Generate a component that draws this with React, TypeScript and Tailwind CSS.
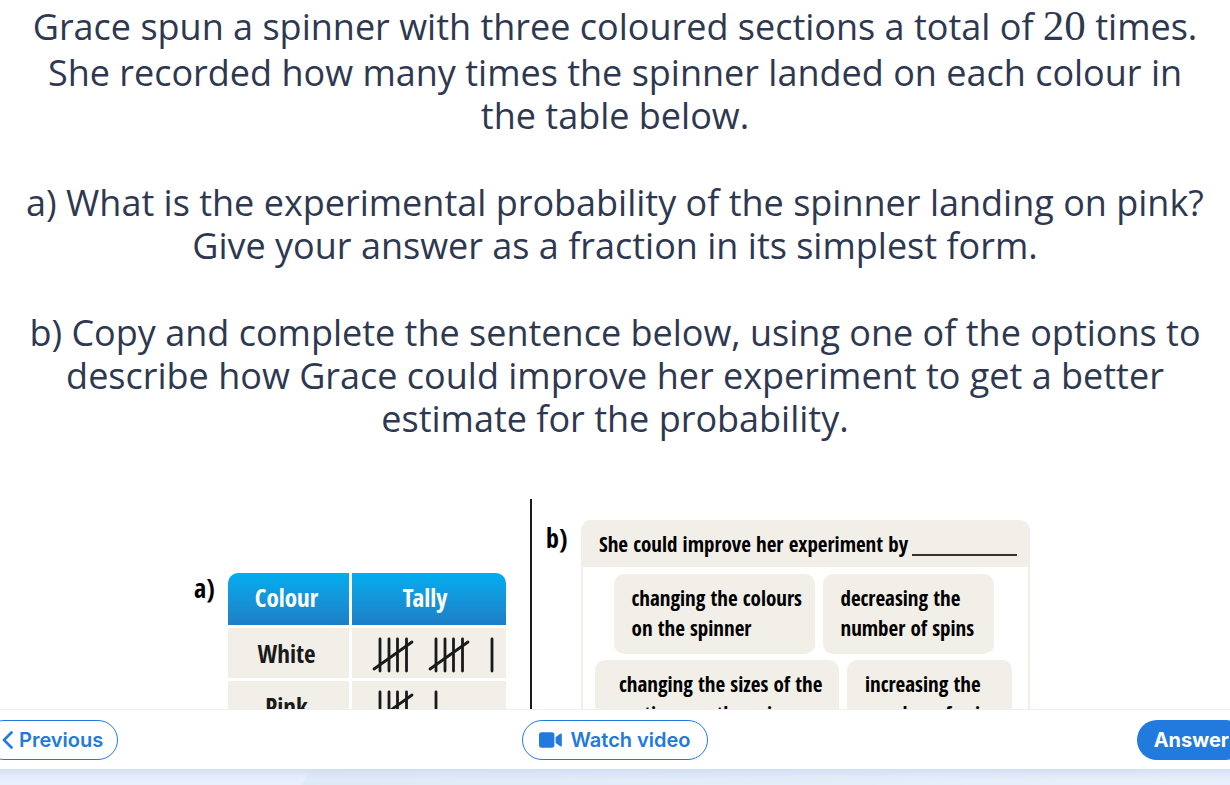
import type { ReactNode } from "react";

const INK = "#1a1a1a";

function FiveBar({ x }: { x: number }) {
  return (
    <g>
      {[0, 9, 17.5, 26.5].map((dx) => (
        <line key={dx} x1={x + dx} x2={x + dx} y1={11} y2={43} />
      ))}
      <line x1={x - 6} y1={41} x2={x + 32} y2={14} />
    </g>
  );
}

function Tally({ count }: { count: number }) {
  const fives = Math.floor(count / 5);
  const ones = count % 5;
  return (
    <svg
      viewBox="0 0 154 50"
      className="block h-[50px] w-full"
      fill="none"
      stroke={INK}
      strokeWidth={2.8}
      strokeLinecap="round"
      role="img"
      aria-label={String(count)}
    >
      {Array.from({ length: fives }, (_, i) => (
        <FiveBar key={i} x={28 + i * 56} />
      ))}
      {Array.from({ length: ones }, (_, i) => (
        <line key={i} x1={28 + fives * 56 + i * 9} x2={28 + fives * 56 + i * 9} y1={11} y2={43} />
      ))}
    </svg>
  );
}

function Option({ className, children }: { className: string; children: ReactNode }) {
  return (
    <li className={`h-20 rounded-[10px] bg-[#f2efe9] pt-[9px] text-[21px] leading-[30px] whitespace-nowrap ${className}`}>
      {children}
    </li>
  );
}

function VideoIcon() {
  return (
    <svg viewBox="0 0 23 16" className="h-4 w-[23px]" fill="currentColor" aria-hidden="true">
      <rect x="0" y="0.3" width="15.4" height="15.4" rx="2.6" />
      <path d="M16.6 6 Q16.6 5.2 17.2 4.7 L20.8 2 Q22.8 0.9 22.8 2.8 V13.2 Q22.8 15.1 20.8 14 L17.2 11.3 Q16.6 10.8 16.6 10 Z" />
    </svg>
  );
}

export default function App() {
  return (
    <div className="flex h-screen flex-col overflow-hidden bg-white font-['Open_Sans',sans-serif]">
      <main className="min-h-0 flex-1 overflow-hidden">
        <section className="flex flex-col gap-11 text-center text-4xl leading-[43px] text-[#2e3850]">
          <p>
            Grace spun a spinner with three coloured sections a total of{" "}
            <span className="font-['Liberation_Serif',serif] text-[43px] leading-[51px]">20</span> times.
            <br />
            She recorded how many times the spinner landed on each colour in
            <br />
            the table below.
          </p>
          <p>
            a) What is the experimental probability of the spinner landing on pink?
            <br />
            Give your answer as a fraction in its simplest form.
          </p>
          <p>
            b) Copy and complete the sentence below, using one of the options to
            <br />
            describe how Grace could improve her experiment to get a better
            <br />
            estimate for the probability.
          </p>
        </section>

        <section className="mt-[59px] flex justify-center font-['Open_Sans_Condensed','Open_Sans',sans-serif] font-bold text-black">
          <div className="flex w-[342px] shrink-0 items-start border-r-2 border-[#1a1a1a] pt-[71px] pl-1">
            <span className="w-[31px] text-[26px] leading-9">a)</span>
            <table className="w-[284px] table-fixed border-separate border-spacing-[3px] text-center text-[25px] leading-9 text-[#1a1a1a]">
              <thead>
                <tr className="h-[52px] text-white">
                  <th scope="col" className="w-[121px] rounded-tl-[10px] bg-linear-to-b from-[#00adef] to-[#1c7fc6] p-0 pr-1 pb-1">
                    Colour
                  </th>
                  <th scope="col" className="rounded-tr-[10px] bg-linear-to-b from-[#00adef] to-[#1c7fc6] p-0 pr-2 pb-1">
                    Tally
                  </th>
                </tr>
              </thead>
              <tbody>
                <tr className="bg-[#f2efe9]">
                  <th scope="row" className="p-0 pr-1">White</th>
                  <td className="p-0"><Tally count={11} /></td>
                </tr>
                <tr className="bg-[#f2efe9]">
                  <th scope="row" className="p-0 pr-1">Pink</th>
                  <td className="p-0"><Tally count={6} /></td>
                </tr>
              </tbody>
            </table>
          </div>

          <div className="flex w-[508px] shrink-0 items-start pt-[21px] pl-[14px]">
            <span className="w-[35px] text-[26px] leading-9">b)</span>
            <div className="w-[449px] rounded-t-[10px] border-x-2 border-[#f2efe9]">
              <p className="flex h-[47px] items-center gap-1 rounded-t-lg bg-[#f2efe9] pt-0.5 pr-[11px] pl-4 text-[21px] whitespace-nowrap">
                She could improve her experiment by
                <span className="mt-5 flex-1 border-b-2 border-[#333333]" />
              </p>
              <ul className="flex flex-wrap justify-center gap-x-2 gap-y-1.5 pt-[7px] pr-1">
                <Option className="w-[201px] pl-[18px]">changing the colours<br />on the spinner</Option>
                <Option className="w-[171px] pl-[18px]">decreasing the<br />number of spins</Option>
                <Option className="w-[244px] pl-6">changing the sizes of the<br />sections on the spinner</Option>
                <Option className="w-[165px] pl-[18px]">increasing the<br />number of spins</Option>
              </ul>
            </div>
          </div>
        </section>
      </main>

      <footer className="relative z-10 -mx-4 flex h-[60px] shrink-0 items-center border-t border-[#ebeffa] bg-white font-['Inter',sans-serif] text-xl font-semibold text-[#2279de] shadow-[0_8px_8px_-4px_#cfdbf3]">
        <div className="flex flex-1 justify-start">
          <button type="button" className="flex h-10 items-center gap-1.5 rounded-full border border-[#2279de] bg-white pr-3.5 pl-[17px]">
            <svg viewBox="0 0 11 18" className="h-[18px] w-[11px]" fill="none" stroke="currentColor" strokeWidth={2.6} strokeLinecap="round" strokeLinejoin="round" aria-hidden="true">
              <path d="M9.5 1.5 L2 9 L9.5 16.5" />
            </svg>
            Previous
          </button>
        </div>
        <button type="button" className="flex h-10 items-center gap-2 rounded-full border border-[#2279de] bg-white px-4">
          <VideoIcon />
          Watch video
        </button>
        <div className="flex flex-1 justify-end">
          <button type="button" className="h-10 rounded-full bg-[#2279de] px-[17px] font-bold text-white">Answer</button>
        </div>
      </footer>

      <div className="h-4 shrink-0 bg-[#e9effd]">
        <svg viewBox="0 0 1230 16" preserveAspectRatio="none" className="block h-full w-full" aria-hidden="true">
          <defs>
            <linearGradient id="wash">
              <stop offset="0" stopColor="#deebf7" />
              <stop offset="1" stopColor="#e8f0fb" />
            </linearGradient>
          </defs>
          <path d="M312 0 H1230 V16 H302 Z" fill="url(#wash)" />
        </svg>
      </div>
    </div>
  );
}
